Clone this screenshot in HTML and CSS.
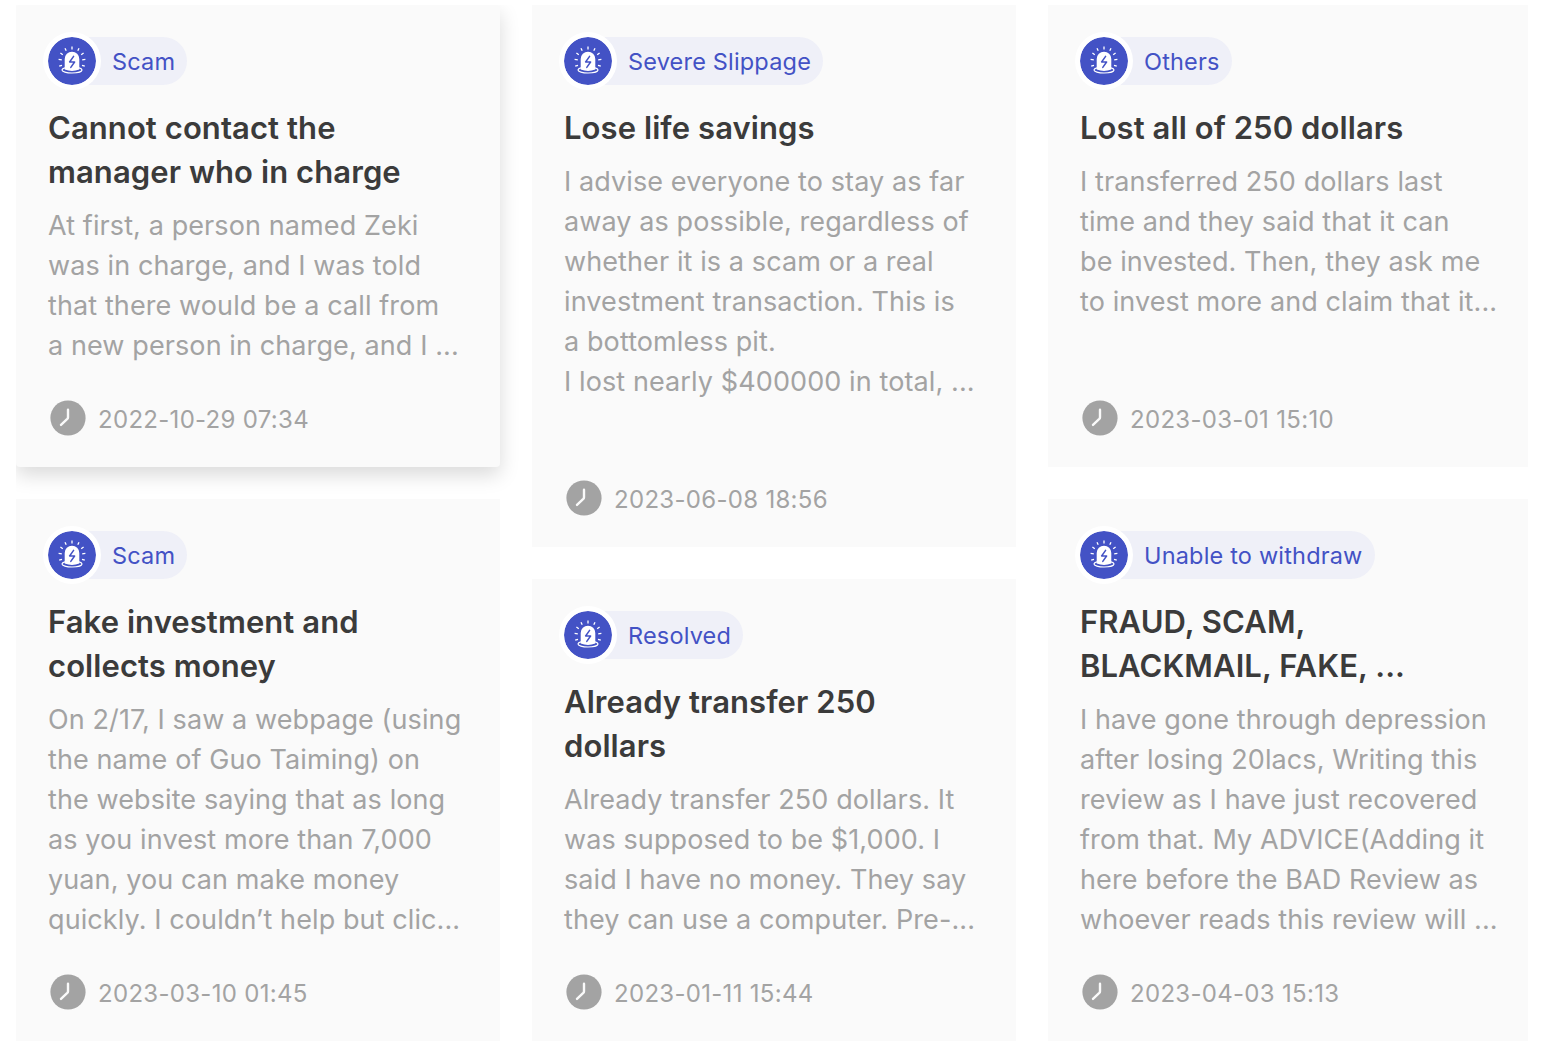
FILE: index.html
```
<!DOCTYPE html>
<html lang="en">
<head>
    <meta charset="UTF-8">
    <meta name="viewport" content="width=device-width, initial-scale=1.0">
    <title>Exposure</title>
    <link rel="stylesheet" href="styles.css">
</head>
<body>
    <!-- Shared icons -->
    <svg class="sprite" width="0" height="0">
        <symbol id="alarm" viewBox="0 0 48 48">
            <circle cx="24" cy="24" r="24" fill="#4352c5"/>
            <ellipse cx="24" cy="33" rx="10" ry="3" fill="#4352c5" stroke="#fff" stroke-width="1.2"/>
            <path d="M16.7 32.6V22a7.3 7.3 0 0 1 14.6 0v10.6q-7.3 2.8-14.6 0z" fill="#fff"/>
            <path d="M25.6 19.4L21.6 25h5L22.8 30.4" fill="none" stroke="#4352c5" stroke-width="1.5" stroke-linejoin="round" stroke-linecap="round"/>
            <path d="M24 9.6v3M17 11.2l1.2 2.6M31 11.2l-1.2 2.6M12.4 16l2.4 1.8M35.6 16l-2.4 1.8M10.6 22.4l3.2.5M37.4 22.4l-3.2.5M11.2 29.2l2.8-.9M36.8 29.2l-2.8-.9" stroke="#fff" stroke-width="1.3"/>
        </symbol>
        <symbol id="clock" viewBox="0 0 36 36">
            <circle cx="18" cy="18" r="17.6" fill="#a3a3a3"/>
            <path d="M18 9.8v7.4q0 1-.7 1.7l-6.3 6" fill="none" stroke="#fafafa" stroke-width="2.4" stroke-linecap="round"/>
        </symbol>
    </svg>

    <div class="board">
        <div class="column">
            <div class="card active">
                <div class="tag"><svg class="tag-icon"><use href="#alarm"/></svg><span class="tag-name">Scam</span></div>
                <h2>Cannot contact the<br>manager who in charge</h2>
                <p>At first, a person named Zeki<br>was in charge, and I was told<br>that there would be a call from<br>a new person in charge, and I ...</p>
                <div class="date"><svg class="clock"><use href="#clock"/></svg><span>2022-10-29 07:34</span></div>
            </div>
            <div class="card tall">
                <div class="tag"><svg class="tag-icon"><use href="#alarm"/></svg><span class="tag-name">Scam</span></div>
                <h2>Fake investment and<br>collects money</h2>
                <p>On 2/17, I saw a webpage (using<br>the name of Guo Taiming) on<br>the website saying that as long<br>as you invest more than 7,000<br>yuan, you can make money<br>quickly. I couldn’t help but clic...</p>
                <div class="date"><svg class="clock"><use href="#clock"/></svg><span>2023-03-10 01:45</span></div>
            </div>
        </div>

        <div class="column">
            <div class="card tall">
                <div class="tag"><svg class="tag-icon"><use href="#alarm"/></svg><span class="tag-name">Severe Slippage</span></div>
                <h2>Lose life savings</h2>
                <p>I advise everyone to stay as far<br>away as possible, regardless of<br>whether it is a scam or a real<br>investment transaction. This is<br>a bottomless pit.<br>I lost nearly $400000 in total, ...</p>
                <div class="date"><svg class="clock"><use href="#clock"/></svg><span>2023-06-08 18:56</span></div>
            </div>
            <div class="card">
                <div class="tag"><svg class="tag-icon"><use href="#alarm"/></svg><span class="tag-name">Resolved</span></div>
                <h2>Already transfer 250<br>dollars</h2>
                <p>Already transfer 250 dollars. It<br>was supposed to be $1,000. I<br>said I have no money. They say<br>they can use a computer. Pre-...</p>
                <div class="date"><svg class="clock"><use href="#clock"/></svg><span>2023-01-11 15:44</span></div>
            </div>
        </div>

        <div class="column">
            <div class="card">
                <div class="tag"><svg class="tag-icon"><use href="#alarm"/></svg><span class="tag-name">Others</span></div>
                <h2>Lost all of 250 dollars</h2>
                <p>I transferred 250 dollars last<br>time and they said that it can<br>be invested. Then, they ask me<br>to invest more and claim that it...</p>
                <div class="date"><svg class="clock"><use href="#clock"/></svg><span>2023-03-01 15:10</span></div>
            </div>
            <div class="card tall">
                <div class="tag"><svg class="tag-icon"><use href="#alarm"/></svg><span class="tag-name">Unable to withdraw</span></div>
                <h2>FRAUD, SCAM,<br>BLACKMAIL, FAKE, ...</h2>
                <p>I have gone through depression<br>after losing 20lacs, Writing this<br>review as I have just recovered<br>from that. My ADVICE(Adding it<br>here before the BAD Review as<br>whoever reads this review will ...</p>
                <div class="date"><svg class="clock"><use href="#clock"/></svg><span>2023-04-03 15:13</span></div>
            </div>
        </div>
    </div>
</body>
</html>
```

FILE: styles.css
```
* {
    box-sizing: border-box;
}

body {
    margin: 0;
    padding: 5px 18px 0 16px;
    background-color: #fff;
    font-family: Inter, "Liberation Sans", sans-serif;
}

.sprite {
    position: absolute;
}

.board {
    display: grid;
    grid-template-columns: 484px 484px 480px;
    gap: 32px;
    height: 1053px;
    overflow: hidden;
}

.column {
    display: flex;
    flex-direction: column;
    gap: 32px;
}

.card {
    display: flex;
    flex-direction: column;
    align-items: flex-start;
    height: 462px;
    padding: 32px 0 31px 32px;
    background-color: #fafafa;
    white-space: nowrap;
}

.card.tall {
    height: 542px;
}

.card.active {
    border-radius: 4px;
    box-shadow: 0 8px 20px rgba(0, 0, 0, 0.15);
}

.tag {
    display: flex;
    align-items: center;
    height: 48px;
    padding-right: 12px;
    border-radius: 24px;
    background-color: #eff0f8;
    color: #4352c5;
    font-size: 23.5px;
    letter-spacing: 0.18px;
}

.tag-icon {
    width: 48px;
    height: 48px;
    margin-right: 16px;
    border-radius: 50%;
    box-shadow: 0 0 0 5px #fff;
}

h2 {
    margin: 21px 0 12px;
    color: #3b3b3b;
    font-size: 31px;
    font-weight: 600;
    line-height: 44px;
    letter-spacing: 0.08px;
}

p {
    margin: 0;
    color: #a3a3a3;
    font-size: 27px;
    line-height: 40px;
    letter-spacing: 0.1px;
}

.date {
    display: flex;
    align-items: center;
    margin-top: auto;
    padding-left: 2px;
    color: #a3a3a3;
    font-size: 24px;
    line-height: 36px;
    letter-spacing: 0.3px;
}

.date span {
    padding-top: 2px;
    margin-bottom: -2px;
    line-height: 34px;
}

.clock {
    width: 36px;
    height: 36px;
    margin-right: 12px;
}
```
